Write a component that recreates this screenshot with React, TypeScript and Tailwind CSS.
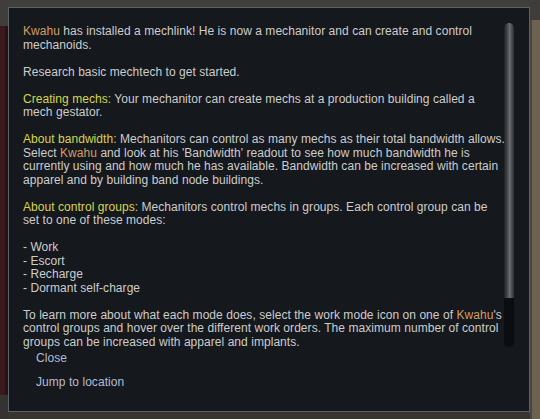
import React from 'react';

const Pawn: React.FC<{ children: React.ReactNode }> = ({ children }) => (
  <span className="text-[#d49d62]">{children}</span>
);

const Label: React.FC<{ children: React.ReactNode }> = ({ children }) => (
  <span className="text-[#d6d64c]">{children}</span>
);

const App: React.FC = () => {
  return (
    <div className="flex w-[540px] h-[419px] overflow-hidden bg-[#3a3938] font-['Liberation_Sans',Arial,sans-serif]">
      {/* left map strip */}
      <div className="flex flex-col w-[8px] shrink-0">
        <div className="h-[26px] bg-[#3f3e3d]" />
        <div className="flex-1 bg-[#3a181b] border-r-[3px] border-[#241416]" />
        <div className="h-[24px] bg-[#343332]" />
      </div>

      <div className="flex flex-col w-[522px] shrink-0">
        <div className="h-[7px] bg-[#403f3e]" />

        {/* dialog */}
        <div className="flex flex-col h-[405px] border border-[#5b6169] bg-[#15181c] text-[12px] tracking-[0.05px] leading-[13.5px] text-[#cdcdcd]">
          <div className="flex h-[342px] overflow-hidden">
            <div className="w-[492px] pl-[14px] pt-[17px] whitespace-nowrap">
              <p className="mb-[13.5px]">
                <Pawn>Kwahu</Pawn> has installed a mechlink! He is now a mechanitor and can create and control
                <br />
                mechanoids.
              </p>
              <p className="mb-[13.5px]">Research basic mechtech to get started.</p>
              <p className="mb-[13.5px]">
                <Label>Creating mechs:</Label> Your mechanitor can create mechs at a production building called a
                <br />
                mech gestator.
              </p>
              <p className="mb-[13.5px]">
                <Label>About bandwidth:</Label> Mechanitors can control as many mechs as their total bandwidth allows.
                <br />
                Select <Pawn>Kwahu</Pawn> and look at his 'Bandwidth' readout to see how much bandwidth he is
                <br />
                currently using and how much he has available. Bandwidth can be increased with certain
                <br />
                apparel and by building band node buildings.
              </p>
              <p className="mb-[13.5px]">
                <Label>About control groups:</Label> Mechanitors control mechs in groups. Each control group can be
                <br />
                set to one of these modes:
              </p>
              <p className="mb-[13.5px]">
                - Work
                <br />
                - Escort
                <br />
                - Recharge
                <br />
                - Dormant self-charge
              </p>
              <p>
                To learn more about what each mode does, select the work mode icon on one of <Pawn>Kwahu</Pawn>'s
                <br />
                control groups and hover over the different work orders. The maximum number of control
                <br />
                groups can be increased with apparel and implants.
              </p>
            </div>

            {/* scrollbar */}
            <div className="flex flex-col w-[10px] h-[324px] mt-[15px] ml-[3px] shrink-0">
              <div className="h-[275px] rounded-t-[5px] bg-[linear-gradient(to_right,#1e2023,#55585c_45%,#6b6e72_55%,#2c2e31)]" />
              <div className="flex-1 rounded-b-[5px] bg-[#0c0d10]" />
            </div>
          </div>

          <div className="flex flex-col items-start gap-[10px] pl-[27px] pt-[1px] text-[#b3bbd8] leading-[14px]">
            <button type="button" className="cursor-pointer">Close</button>
            <button type="button" className="cursor-pointer">Jump to location</button>
          </div>
        </div>

        <div className="flex-1 bg-[#38342f]" />
      </div>

      {/* right map strip */}
      <div className="flex flex-col w-[10px] shrink-0">
        <div className="h-[20px] bg-[#3e3d3c]" />
        <div className="flex-1 bg-[#6c6250] border-l-[2px] border-[#4a4540]" />
      </div>
    </div>
  );
};

export default App;
